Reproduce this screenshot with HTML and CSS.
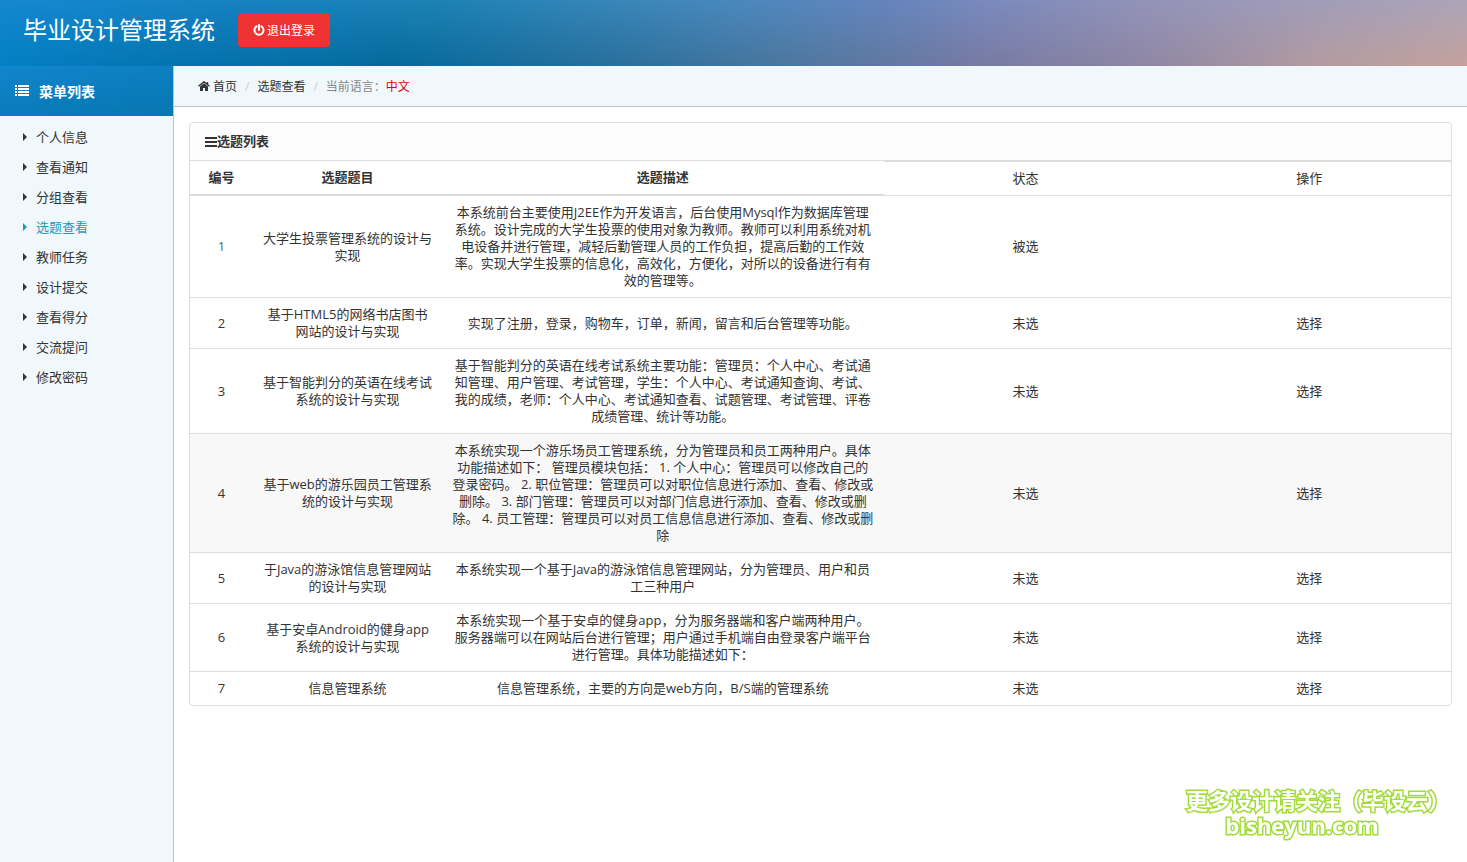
FILE: index.html
```html
<!DOCTYPE html>
<html lang="zh-CN">
<head>
  <meta charset="UTF-8">
  <meta name="viewport" content="width=device-width, initial-scale=1.0">
  <title>毕业设计管理系统</title>
  <link rel="stylesheet" href="styles.css">
</head>
<body>
  <!-- Header -->
  <header class="header">
    <h1>毕业设计管理系统</h1>
    <button type="button" class="logout">
      <svg width="12" height="12" viewBox="0 0 12 12"><path d="M3.6 2.4A4.5 4.5 0 1 0 8.4 2.4M6 1v5" fill="none" stroke="#fff" stroke-width="2" stroke-linecap="round"/></svg>
      退出登录
    </button>
  </header>

  <div class="container">
    <!-- Sidebar -->
    <nav class="sidebar">
      <h2>
        <svg width="14" height="12" viewBox="0 0 14 12"><path d="M0 1h2M3 1h11M0 4h2M3 4h11M0 7h2M3 7h11M0 10h2M3 10h11" stroke="#fff" stroke-width="2"/></svg>
        菜单列表
      </h2>
      <ul class="menu">
        <li><a href="#">个人信息</a></li>
        <li><a href="#">查看通知</a></li>
        <li><a href="#">分组查看</a></li>
        <li><a href="#" class="active">选题查看</a></li>
        <li><a href="#">教师任务</a></li>
        <li><a href="#">设计提交</a></li>
        <li><a href="#">查看得分</a></li>
        <li><a href="#">交流提问</a></li>
        <li><a href="#">修改密码</a></li>
      </ul>
    </nav>

    <!-- Main -->
    <main class="main">
      <ul class="breadcrumb">
        <li>
          <a href="#"><svg width="12" height="10" viewBox="0 0 12 10"><path d="M6 2.2 10 5.5V10H7V7H5v3H2V5.500z" fill="#333"/><path d="M.5 5.300 6 .8l5.500 4.500M9.500 1v2.500" fill="none" stroke="#333" stroke-width="1.400"/></svg>首页</a>
        </li>
        <li><a href="#">选题查看</a></li>
        <li>当前语言：<span class="lang">中文</span></li>
      </ul>

      <section class="panel">
        <div class="panel-head">
          <svg width="12" height="10" viewBox="0 0 12 10"><path d="M0 1h12M0 5h12M0 9h12" stroke="#333" stroke-width="2"/></svg>选题列表
        </div>
        <table class="table">
          <colgroup>
            <col class="col-no">
            <col class="col-title">
            <col class="col-desc">
            <col>
            <col>
          </colgroup>
          <thead>
            <tr>
              <th>编号</th>
              <th>选题题目</th>
              <th>选题描述</th>
              <td>状态</td>
              <td>操作</td>
            </tr>
          </thead>
          <tbody>
            <tr>
              <td class="picked">1</td>
              <td>大学生投票管理系统的设计与实现</td>
              <td>本系统前台主要使用J2EE作为开发语言，后台使用Mysql作为数据库管理<br>系统。设计完成的大学生投票的使用对象为教师。教师可以利用系统对机<br>电设备并进行管理，减轻后勤管理人员的工作负担，提高后勤的工作效<br>率。实现大学生投票的信息化，高效化，方便化，对所以的设备进行有有<br>效的管理等。</td>
              <td>被选</td>
              <td></td>
            </tr>
            <tr>
              <td>2</td>
              <td>基于HTML5的网络书店图书<br>网站的设计与实现</td>
              <td>实现了注册，登录，购物车，订单，新闻，留言和后台管理等功能。</td>
              <td>未选</td>
              <td><a href="#">选择</a></td>
            </tr>
            <tr>
              <td>3</td>
              <td>基于智能判分的英语在线考试系统的设计与实现</td>
              <td>基于智能判分的英语在线考试系统主要功能：管理员：个人中心、考试通知管理、用户管理、考试管理，学生：个人中心、考试通知查询、考试、我的成绩，老师：个人中心、考试通知查看、试题管理、考试管理、评卷成绩管理、统计等功能。</td>
              <td>未选</td>
              <td><a href="#">选择</a></td>
            </tr>
            <tr class="hover">
              <td>4</td>
              <td>基于web的游乐园员工管理系统的设计与实现</td>
              <td>本系统实现一个游乐场员工管理系统，分为管理员和员工两种用户。具体<br>功能描述如下： 管理员模块包括： 1. 个人中心：管理员可以修改自己的<br>登录密码。 2. 职位管理：管理员可以对职位信息进行添加、查看、修改或<br>删除。 3. 部门管理：管理员可以对部门信息进行添加、查看、修改或删<br>除。 4. 员工管理：管理员可以对员工信息信息进行添加、查看、修改或删<br>除</td>
              <td>未选</td>
              <td><a href="#">选择</a></td>
            </tr>
            <tr>
              <td>5</td>
              <td>于Java的游泳馆信息管理网站的设计与实现</td>
              <td>本系统实现一个基于Java的游泳馆信息管理网站，分为管理员、用户和员工三种用户</td>
              <td>未选</td>
              <td><a href="#">选择</a></td>
            </tr>
            <tr>
              <td>6</td>
              <td>基于安卓Android的健身app系统的设计与实现</td>
              <td>本系统实现一个基于安卓的健身app，分为服务器端和客户端两种用户。服务器端可以在网站后台进行管理；用户通过手机端自由登录客户端平台进行管理。具体功能描述如下：</td>
              <td>未选</td>
              <td><a href="#">选择</a></td>
            </tr>
            <tr>
              <td>7</td>
              <td>信息管理系统</td>
              <td>信息管理系统，主要的方向是web方向，B/S端的管理系统</td>
              <td>未选</td>
              <td><a href="#">选择</a></td>
            </tr>
          </tbody>
        </table>
      </section>
    </main>
  </div>

  <div class="watermark">
    <p>更多设计请关注（毕设云）</p>
    <p class="site">bisheyun.com</p>
  </div>
</body>
</html>
```
FILE: styles.css
```css
* {
  box-sizing: border-box;
}
body {
  margin: 0;
  min-height: 100vh;
  display: flex;
  flex-direction: column;
  font-family: "Open Sans", "Noto Sans CJK SC", sans-serif;
  font-size: 13px;
  line-height: 17px;
  color: #333;
  background-color: #fff;
}
a {
  color: inherit;
  text-decoration: none;
}
ul {
  list-style: none;
  margin: 0;
  padding: 0;
}

/* Header */
.header {
  position: relative;
  z-index: 0;
  height: 66px;
  padding: 0 23px;
  display: flex;
  align-items: flex-start;
  gap: 23px;
  background: linear-gradient(90deg, #0480c4 0%, #0474b0 12%, #056a9c 27%, #2a709c 42%, #50789f 55%, #747aa4 66%, #9288a4 79%, #b49ca0 90%, #c4a29c 100%);
}
/* lighter top edge, fades out towards the bottom */
.header::before {
  content: "";
  position: absolute;
  inset: 0;
  z-index: -1;
  background: linear-gradient(90deg, #1488d0 0%, #1682c2 15%, #1e82b4 30%, #4a88bc 50%, #6484bc 60%, #7c8abc 68%, #9494b8 79%, #aca4b8 100%);
  -webkit-mask-image: linear-gradient(#000, transparent);
  mask-image: linear-gradient(#000, transparent);
}
.header h1 {
  margin: 12px 0 0;
  font-size: 24px;
  line-height: 36px;
  font-weight: normal;
  color: #fff;
}
.logout {
  margin-top: 13px;
  height: 34px;
  padding: 0 15px;
  display: flex;
  align-items: center;
  gap: 2px;
  border: none;
  border-radius: 4px;
  background-color: #ee3333;
  color: #fff;
  font-family: inherit;
  font-size: 12px;
  cursor: pointer;
}

.container {
  flex: 1;
  display: flex;
}

/* Sidebar */
.sidebar {
  width: 174px;
  flex-shrink: 0;
  background-color: #f0f8fc;
  border-right: 1px solid #b4c6d2;
}
.sidebar h2 {
  margin: 0;
  height: 50px;
  padding: 0 15px;
  display: flex;
  align-items: center;
  gap: 10px;
  font-size: 14px;
  color: #fff;
  background: linear-gradient(170deg, #1286cc, #0a7cbc 60%, #0876b0);
}
.menu {
  padding-top: 6px;
}
.menu a {
  display: flex;
  align-items: center;
  gap: 9px;
  height: 30px;
  padding-left: 23px;
}
.menu a::before {
  content: "";
  border: 4px solid transparent;
  border-left-color: currentColor;
  border-right-width: 0;
}
.menu a.active {
  color: #1a9cb7;
}

/* Main */
.main {
  flex: 1;
  min-width: 0;
}
.breadcrumb {
  height: 41px;
  padding-left: 24px;
  display: flex;
  align-items: center;
  font-size: 12px;
  color: #888;
  background-color: #f0f8fc;
  border-bottom: 1px solid #b4c6d2;
}
.breadcrumb li + li::before {
  content: "/";
  padding: 0 8px;
  color: #ccc;
}
.breadcrumb a {
  color: #333;
}
.breadcrumb svg {
  margin-right: 3px;
}
.breadcrumb .lang {
  color: #e00000;
}
.panel {
  margin: 15px;
  border: 1px solid #ddd;
  border-radius: 4px;
}
.panel-head {
  height: 38px;
  padding: 0 15px;
  display: flex;
  align-items: center;
  font-weight: bold;
  background-color: #fcfcfc;
  border-bottom: 1px solid #ddd;
  border-radius: 4px 4px 0 0;
}
.table {
  width: 100%;
  table-layout: fixed;
  border-spacing: 0;
  text-align: center;
}
.col-no {
  width: 5%;
}
.col-title {
  width: 15%;
}
.col-desc {
  width: 35%;
}
.table th,
.table td {
  padding: 8px;
  vertical-align: middle;
}
.table th {
  border-bottom: 1px solid #ddd;
}
.table td {
  border-top: 1px solid #ddd;
}
.table .picked {
  color: #3c763d;
}
.table .hover,
.table tbody tr:hover {
  background-color: #f8f8f8;
}

.watermark {
  position: fixed;
  right: 17px;
  bottom: 24px;
  font-family: "Noto Sans CJK SC", sans-serif;
  font-size: 22px;
  line-height: 26px;
  font-weight: bold;
  text-align: center;
  color: #fff;
  -webkit-text-stroke: 3px #a2dc3c;
  paint-order: stroke fill;
}
.watermark p {
  margin: 0;
}
.watermark .site {
  padding-right: 32px;
  font-family: "Open Sans", sans-serif;
}
```
